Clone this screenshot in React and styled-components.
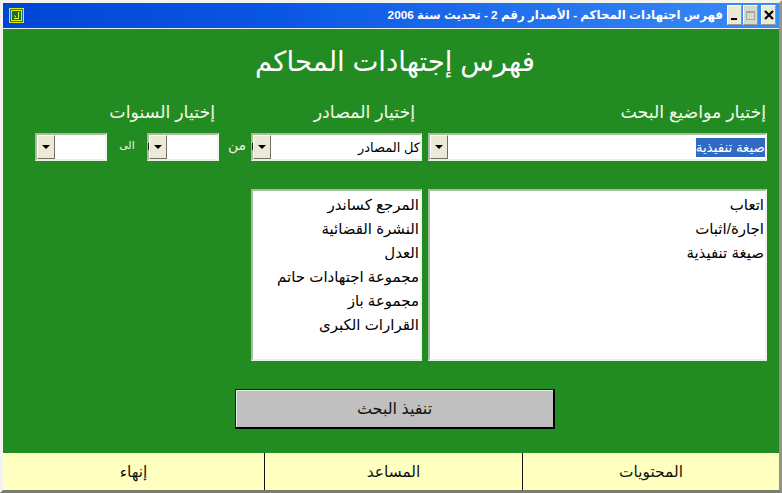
import React from "react";
import styled, { createGlobalStyle } from "styled-components";

const Global = createGlobalStyle`
  html, body { margin: 0; padding: 0; background: #fff; }
  #root { width: 782px; height: 493px; overflow: hidden; }
`;
const FONT = `"Liberation Sans", "DejaVu Sans", "Noto Sans", sans-serif`;

const Frame = styled.div`
  width: 782px; height: 493px; box-sizing: border-box;
  display: flex; flex-direction: column;
  background: #f0f0e8;
  border-style: solid; border-color: #f4f4ee #94948a #7c7c74 #f4f4ee;
  border-width: 3px;
  font-family: ${FONT};
`;
const TitleBar = styled.div`
  height: 26px; flex: none; display: flex; align-items: center;
  padding: 0 3px 1px 6px; box-sizing: border-box;
  background: linear-gradient(90deg, #0046d6 0%, #0a56e4 35%, #3a8cf6 100%);
  border-bottom: 1px solid #e8f0f0;
`;
const AppIcon = styled.svg` width: 15px; height: 15px; flex: none; `;
const TitleText = styled.div`
  margin-left: auto; margin-right: 4px;
  color: #fff; font-size: 11.8px; font-weight: bold; white-space: nowrap;
`;
const WinBtn = styled.div`
  width: 15px; height: 20px; flex: none; box-sizing: border-box;
  margin-left: ${(p) => p.$ml}px;
  background: ${(p) => (p.$faded ? "#d8d8cc" : "#ece9d8")};
  border: 1px solid; border-color: #fff #9a9a90 #9a9a90 #fff;
  display: flex; align-items: center; justify-content: center;
`;
const Main = styled.div`
  flex: 1; background: #228b22; display: flex; flex-direction: column;
  min-height: 0;
`;
const Heading = styled.h1`
  margin: 14px 0 0 0; height: 38px; line-height: 38px;
  padding-left: 252px; width: 280px; text-align: center; box-sizing: content-box;
  font-size: 27.6px; font-weight: normal; color: #fff; white-space: nowrap;
`;
const LabelRow = styled.div`
  display: flex; margin-top: 19px; height: 24px; line-height: 24px; color: #f4f8e8;
  font-size: 17.4px; padding-left: 32px;
`;
const Label = styled.div`
  width: ${(p) => p.$w}px; flex: none; text-align: right; white-space: nowrap;
`;
const ComboRow = styled.div`
  display: flex; margin-top: 9px; height: 28px; padding-left: 32px; align-items: stretch;
`;
const Combo = styled.div`
  width: ${(p) => p.$w}px; flex: none; box-sizing: border-box; background: #fff;
  border: 2px solid; border-color: #a8bca0 #f0f4ec #e8f0e4 #a8bca0;
  display: flex; align-items: center; position: relative;
  margin-left: ${(p) => p.$ml || 0}px;
`;
const ClippedTick = styled.span`
  position: absolute; left: -1px; top: 8px; width: 1px; height: 7px; background: #222;
`;
const Arrow = styled.div`
  width: 18px; height: 24px; flex: none; box-sizing: border-box; background: #ece9d8;
  border: 1px solid; border-color: #fff #716f64 #716f64 #fff;
  display: flex; align-items: center; justify-content: center;
  &::after {
    content: ""; border-style: solid; border-width: 4px 4px 0 4px;
    border-color: #000 transparent transparent transparent;
  }
`;
const ComboText = styled.div`
  flex: 1; text-align: right; font-size: 13px; color: #000; white-space: nowrap;
`;
const Selected = styled.span` background: #316ac5; color: #fff; padding: 2px 0; font-size: 13.4px; `;
const Between = styled.div`
  width: ${(p) => p.$w}px; flex: none; text-align: center; color: #f0f4e4;
  font-size: ${(p) => p.$fs}px; line-height: 24px; padding-left: ${(p) => p.$pl || 0}px;
  box-sizing: border-box;
`;
const ListRow = styled.div`
  display: flex; gap: 6px; margin-top: 28px; height: 172px; padding-left: 248px;
`;
const List = styled.div`
  width: ${(p) => p.$w}px; flex: none; box-sizing: border-box; background: #fff;
  border: 2px solid; border-color: #a8bca0 #f0f4ec #e8f0e4 #a8bca0;
  padding: 2px 1px 0 0; text-align: right; font-size: 15px; line-height: 24px; color: #000;
`;
const ListItem = styled.div` white-space: nowrap; `;
const RunButton = styled.button`
  display: block; width: 320px; height: 40px; margin: 28px 0 0 232px; padding: 0;
  background: #c0c0c0; color: #111; font: 16px ${FONT};
  border-style: solid; border-width: 1px 2px 2px 1px; border-color: #142014 #000 #000 #142014;
  box-shadow: inset 1px 1px 0 #e8efe8;
`;
const Footer = styled.div`
  flex: none; height: 37px; margin-top: 24px; display: grid;
  grid-template-columns: 262px 258px 1fr; background: #ffffc0;
`;
const FooterCell = styled.div`
  display: flex; align-items: center; justify-content: center; font-size: 15.4px; color: #111;
  box-sizing: border-box;
  border-right: ${(p) => (p.$last ? "none" : "1px solid #111")};
`;

export default function App() {
  return (
    <Frame>
      <Global />
      <TitleBar>
        <AppIcon viewBox="0 0 15 15">
          <rect x="0.5" y="0.5" width="14" height="14" fill="#1a70a0" stroke="#d8f000" />
          <rect x="2.5" y="2.5" width="10" height="10" fill="#1e6a30" stroke="#d8f000" />
          <path d="M9.5 4 V10.5 H5 M5 7.5 L7 9" fill="none" stroke="#e8ff30" strokeWidth="1" />
        </AppIcon>
        <TitleText dir="rtl">فهرس اجتهادات المحاكم - الأصدار رقم 2 - تحديث سنة 2006</TitleText>
        <WinBtn $ml={0}>
          <svg width="9" height="9" viewBox="0 0 9 9"><rect x="1" y="7" width="6" height="2" fill="#000" /></svg>
        </WinBtn>
        <WinBtn $ml={1} $faded>
          <svg width="11" height="11" viewBox="0 0 11 11"><rect x="1.5" y="1.5" width="8" height="8" fill="none" stroke="#a8a898" /><rect x="1" y="1" width="9" height="2" fill="#a8a898" /></svg>
        </WinBtn>
        <WinBtn $ml={3}>
          <svg width="10" height="10" viewBox="0 0 10 10"><path d="M1 1 L9 9 M9 1 L1 9" stroke="#000" strokeWidth="2.2" /></svg>
        </WinBtn>
      </TitleBar>
      <Main>
        <Heading dir="rtl">فهرس إجتهادات المحاكم</Heading>
        <LabelRow>
          <Label $w={180}>إختيار السنوات</Label>
          <Label $w={200}>إختيار المصادر</Label>
          <Label $w={351}>إختيار مواضيع البحث</Label>
        </LabelRow>
        <ComboRow>
          <Combo $w={72}><Arrow /></Combo>
          <Between $w={40} $fs={11}>الى</Between>
          <Combo $w={72}><ClippedTick /><Arrow /></Combo>
          <Between $w={32} $fs={14} $pl={4}>من</Between>
          <Combo $w={171}><ClippedTick /><Arrow /><ComboText dir="rtl">كل المصادر</ComboText></Combo>
          <Combo $w={339} $ml={6}><Arrow /><ComboText dir="rtl"><Selected>صيغة تنفيذية</Selected></ComboText></Combo>
        </ComboRow>
        <ListRow>
          <List $w={171} dir="rtl">
            {["المرجع كساندر", "النشرة القضائية", "العدل", "مجموعة اجتهادات حاتم", "مجموعة باز", "القرارات الكبرى"].map((t) => (
              <ListItem key={t}>{t}</ListItem>
            ))}
          </List>
          <List $w={339} dir="rtl">
            {["اتعاب", "اجارة/اثبات", "صيغة تنفيذية"].map((t) => (
              <ListItem key={t}>{t}</ListItem>
            ))}
          </List>
        </ListRow>
        <RunButton>تنفيذ البحث</RunButton>
        <Footer>
          <FooterCell>إنهاء</FooterCell>
          <FooterCell>المساعد</FooterCell>
          <FooterCell $last>المحتويات</FooterCell>
        </Footer>
      </Main>
    </Frame>
  );
}
